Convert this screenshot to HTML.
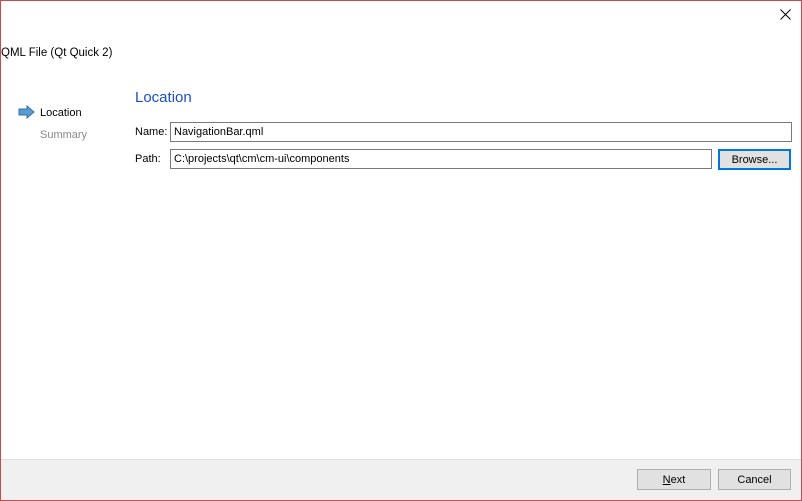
<!DOCTYPE html>
<html><head><meta charset="utf-8"><style>
*{margin:0;padding:0;box-sizing:border-box}
body{width:802px;height:501px;overflow:hidden;font-family:"Liberation Sans",Tahoma,sans-serif;font-size:11px;color:#000;background:#fff;position:relative}
.frame{position:absolute;left:0;top:0;width:802px;height:501px;border:1px solid #c94b4b}
.abs{position:absolute;white-space:nowrap}
.input{position:absolute;border:1px solid #7a7a7a;background:#fff;height:20px;line-height:18px;padding-left:3px;font-size:11px}
.btn{position:absolute;background:#e1e1e1;border:1px solid #adadad;text-align:center;font-size:11px;display:flex;align-items:center;justify-content:center}
</style></head><body>
<svg class="abs" style="left:780px;top:9px" width="11" height="11" viewBox="0 0 11 11"><path d="M0.5 0.5L10.5 10.5M10.5 0.5L0.5 10.5" stroke="#000" stroke-width="1"/></svg>
<div class="abs" style="left:1px;top:47px;font-size:11.5px">QML File (Qt Quick 2)</div>
<svg class="abs" style="left:18px;top:105px" width="18" height="14" viewBox="0 0 18 14"><path d="M1 4h8V1l7 6-7 6V10H1z" fill="#5b9bd5" stroke="#3a6ea5" stroke-width="1"/></svg>
<div class="abs" style="left:40px;top:107px">Location</div>
<div class="abs" style="left:40px;top:129px;color:#888">Summary</div>
<div class="abs" style="left:135px;top:89px;font-size:15px;color:#1c4fbf">Location</div>
<div class="abs" style="left:135px;top:126px">Name:</div>
<div class="input" style="left:170px;top:122px;width:622px">NavigationBar.qml</div>
<div class="abs" style="left:135px;top:153px">Path:</div>
<div class="input" style="left:170px;top:149px;width:542px">C:\projects\qt\cm\cm-ui\components</div>
<div class="btn" style="left:718px;top:149px;width:73px;height:21px;border:2px solid #0078d7">Browse...</div>
<div class="abs" style="left:1px;top:459px;width:800px;height:41px;background:#f0f0f0;border-top:1px solid #dfdfdf"></div>
<div class="btn" style="left:637px;top:469px;width:74px;height:21px"><span><u>N</u>ext</span></div>
<div class="btn" style="left:718px;top:469px;width:73px;height:21px">Cancel</div>
<div class="frame"></div>
</body></html>
